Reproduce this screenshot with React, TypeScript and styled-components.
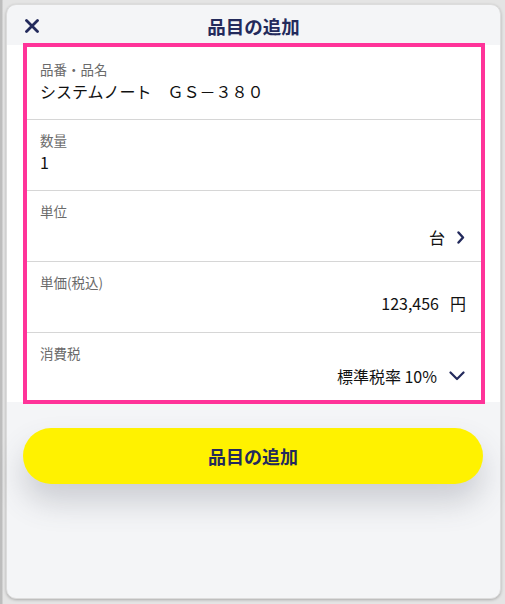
import React from "react";
import styled, { createGlobalStyle } from "styled-components";

const GlobalStyle = createGlobalStyle`
  *, *::before, *::after { box-sizing: border-box; }
  html, body { margin: 0; padding: 0; }
  body {
    background: #d4d4d4;
    font-family: "Noto Sans CJK JP", "Noto Sans", "Liberation Sans", sans-serif;
  }
`;

const Page = styled.div`
  width: 505px;
  height: 604px;
  padding: 4px 4px 5px 6px;
  background: linear-gradient(to right, #bdbdbd 0, #bdbdbd 2px, #e4e4e4 3px, #e4e4e4 100%);
`;

const Modal = styled.div`
  width: 495px;
  height: 595px;
  background: #f4f5f7;
  border: 1px solid #dcdcdc;
  border-radius: 10px;
  box-shadow: 0 1px 3px rgba(0, 0, 0, 0.25);
  display: flex;
  flex-direction: column;
`;

const Header = styled.div`
  height: 40px;
  flex-shrink: 0;
  display: grid;
  grid-template-columns: 40px 1fr 40px;
  align-items: center;
  padding: 1px 0 0 18px;
`;

const CloseButton = styled.button`
  border: 0;
  background: none;
  padding: 0;
  width: 14px;
  height: 14px;
  display: flex;
  cursor: pointer;
`;

const Title = styled.h1`
  margin: 0;
  text-align: center;
  font-size: 18.5px;
  font-weight: 700;
  color: #232a5c;
  padding-right: 18px;
`;

const Content = styled.div`
  background: #ffffff;
  padding: 0 15px 0 16px;
  height: 357px;
  flex-shrink: 0;
  display: flex;
`;

const Highlight = styled.div`
  flex: 1;
  border: 4px solid #ff3399;
  margin: -2px 0 -2px 0;
  display: flex;
  flex-direction: column;
`;

const Row = styled.div<{ $height: number; $top: number; $last?: boolean }>`
  height: ${(p) => p.$height}px;
  border-bottom: ${(p) => (p.$last ? "none" : "1px solid #d6d6d6")};
  padding: ${(p) => p.$top}px 15px 0 13px;
  display: flex;
  flex-direction: column;
  flex-shrink: 0;
`;

const Label = styled.div`
  font-size: 13.5px;
  line-height: 18px;
  color: #6a6a6a;
`;

const Value = styled.div<{ $right?: boolean; $gap: number }>`
  margin-top: ${(p) => p.$gap}px;
  font-size: 16px;
  line-height: 22px;
  color: #111;
  display: flex;
  align-items: center;
  justify-content: ${(p) => (p.$right ? "flex-end" : "flex-start")};
  gap: ${(p) => (p.$right ? "11px" : "0")};
`;

const IconBox = styled.span<{ $w: number }>`
  width: ${(p) => p.$w}px;
  display: inline-flex;
  justify-content: center;
  align-items: center;
`;

const Footer = styled.div`
  padding: 26px 17px 0 16px;
`;

const AddButton = styled.button`
  width: 460px;
  height: 56px;
  border: 0;
  border-radius: 28px;
  background: #fff200;
  color: #232a5c;
  font-family: "Noto Sans CJK JP", "Noto Sans", sans-serif;
  font-size: 18px;
  font-weight: 700;
  box-shadow: 0 18px 30px rgba(80, 85, 100, 0.24);
  cursor: pointer;
`;

const CloseIcon = () => (
  <svg width="14" height="14" viewBox="0 0 14 14">
    <path d="M1.5 1.5 L12.5 12.5 M12.5 1.5 L1.5 12.5" stroke="#232a5c" strokeWidth="2.8" strokeLinecap="round" />
  </svg>
);

const ChevronRight = () => (
  <svg width="8" height="13" viewBox="0 0 8 13">
    <path d="M1.5 1.5 L6 6.5 L1.5 11.5" fill="none" stroke="#232a5c" strokeWidth="2.4" strokeLinecap="round" strokeLinejoin="round" />
  </svg>
);

const ChevronDown = () => (
  <svg width="16" height="10" viewBox="0 0 16 10">
    <path d="M1.5 1.5 L8 8 L14.5 1.5" fill="none" stroke="#232a5c" strokeWidth="2.2" strokeLinecap="round" strokeLinejoin="round" />
  </svg>
);

export default function App() {
  return (
    <>
      <GlobalStyle />
      <Page>
        <Modal>
          <Header>
            <CloseButton aria-label="閉じる">
              <CloseIcon />
            </CloseButton>
            <Title>品目の追加</Title>
            <span />
          </Header>
          <Content>
            <Highlight>
              <Row $height={73} $top={13}>
                <Label>品番・品名</Label>
                <Value $gap={2}>システムノート　ＧＳ－３８０</Value>
              </Row>
              <Row $height={71} $top={11}>
                <Label>数量</Label>
                <Value $gap={2}>1</Value>
              </Row>
              <Row $height={71} $top={11}>
                <Label>単位</Label>
                <Value $right $gap={6}>
                  台
                  <IconBox $w={10}>
                    <ChevronRight />
                  </IconBox>
                </Value>
              </Row>
              <Row $height={71} $top={11}>
                <Label>単価(税込)</Label>
                <Value $right $gap={1}>
                  123,456
                  <span>円</span>
                </Value>
              </Row>
              <Row $height={67} $top={11} $last>
                <Label>消費税</Label>
                <Value $right $gap={3}>
                  標準税率 10%
                  <IconBox $w={18}>
                    <ChevronDown />
                  </IconBox>
                </Value>
              </Row>
            </Highlight>
          </Content>
          <Footer>
            <AddButton>品目の追加</AddButton>
          </Footer>
        </Modal>
      </Page>
    </>
  );
}
